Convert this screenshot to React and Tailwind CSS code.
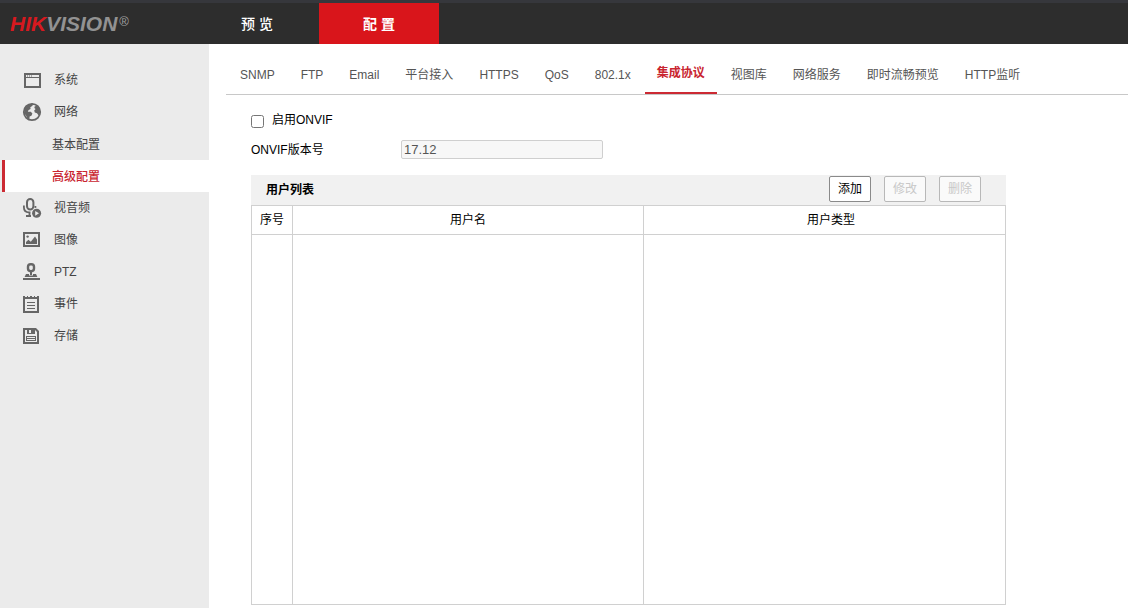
const tabs = [
  "SNMP",
  "FTP",
  "Email",
  "平台接入",
  "HTTPS",
  "QoS",
  "802.1x",
  "集成协议",
  "视图库",
  "网络服务",
  "即时流畅预览",
  "HTTP监听",
];

const activeTab = "集成协议";

const SystemIcon = () => (
  <svg width="20" height="20" viewBox="0 0 20 20" fill="#666" aria-hidden="true">
    <path fillRule="evenodd" d="M2 3h17v15H2zM4 8v8h13V8zM4 5v2h13V5z" />
    <path d="M5 5.5h1v1H5zM7 5.5h1v1H7zM9 5.5h1v1H9z" />
  </svg>
);

const NetworkIcon = () => (
  <svg width="20" height="20" viewBox="0 0 20 20" aria-hidden="true">
    <circle cx="10" cy="10" r="8.2" fill="#ebebeb" stroke="#666" strokeWidth="1.8" />
    <path
      fill="#666"
      d="M3 5.5 6.5 2.5 11 1.5l-.5 2.3-2.2 1.4.3 1.8-2 1-.8 1.8h3l1.6 1.7-1 2.3-1.8.8-.2 2.4-1.6.4-1.4-3.2L2 11zM12.6 4.4 15 3.6l2.6 3.6.6 3.6-1.4 3-1.8-2.6-2.2-.8-.6-1.8 1.4-1.6-1.2-1z"
    />
  </svg>
);

const MediaIcon = () => (
  <svg width="20" height="20" viewBox="0 0 20 20" aria-hidden="true">
    <rect x="5" y="1" width="6.4" height="10.5" rx="3.2" fill="none" stroke="#666" strokeWidth="2" />
    <path d="M1.9 7.5v1.7c0 3 2 5 5 5.2h1.6M7.5 14.5v3M4 18h5" fill="none" stroke="#666" strokeWidth="1.8" />
    <path d="M12.5 8h1.8v1.9h-1.8z" fill="#666" />
    <circle cx="14.6" cy="15.3" r="4.5" fill="#666" />
    <path d="M13.2 12.9v4.8l3.8-2.4z" fill="#ebebeb" />
  </svg>
);

const ImageIcon = () => (
  <svg width="20" height="20" viewBox="0 0 20 20" fill="#666" aria-hidden="true">
    <path fillRule="evenodd" d="M1 2h17v15H1zM3 4v11h13V4z" />
    <circle cx="5.6" cy="6.6" r="1.2" />
    <path d="M4 14v-2l2.4-2.2 2.4 2L13 6.5l2 3V14z" />
  </svg>
);

const PtzIcon = () => (
  <svg width="20" height="20" viewBox="0 0 20 20" fill="#666" aria-hidden="true">
    <rect x="6" y="2.2" width="6" height="7" rx="2.6" fill="none" stroke="#666" strokeWidth="2.4" />
    <path d="M8 9h2v4H8z" />
    <path d="M4 12h3v1.6h4V12h3l1.4 3H2.6zM1 16h17v2H1z" />
  </svg>
);

const EventIcon = () => (
  <svg width="20" height="20" viewBox="0 0 20 20" fill="#666" aria-hidden="true">
    <path fillRule="evenodd" d="M1 3h16v16H1zM3 5v12h12V5z" />
    <path d="M1 2h2v2H1zM5 2h1v2H5zM8 2h2v2H8zM12 2h1v2h-1zM15 2h2v2h-2z" />
    <path d="M5 8h8v1H5zM5 11h8v1H5zM5 14h8v1H5z" />
  </svg>
);

const StorageIcon = () => (
  <svg width="20" height="20" viewBox="0 0 20 20" fill="#666" aria-hidden="true">
    <path fillRule="evenodd" d="M1 2h13l3 3v13H1zM3 4v12h12V6l-2-2z" />
    <path d="M5 3h2v4h2V3h4v5H5z" />
    <path fillRule="evenodd" d="M4 10h10v5H4zM5 11v1h8v-1zM5 13v1h8v-1z" />
  </svg>
);

const menu = [
  { label: "系统", Icon: SystemIcon },
  { label: "网络", Icon: NetworkIcon },
  { label: "基本配置", sub: true },
  { label: "高级配置", sub: true, active: true },
  { label: "视音频", Icon: MediaIcon },
  { label: "图像", Icon: ImageIcon },
  { label: "PTZ", Icon: PtzIcon },
  { label: "事件", Icon: EventIcon },
  { label: "存储", Icon: StorageIcon },
];

const Header = () => (
  <header className="flex h-11 border-t-3 border-[#36373c] bg-[#2d2d2d] text-white">
    <div className="flex w-[199px] items-center gap-[2px] pl-[10px]">
      <span className="text-[21px] leading-5 font-bold italic text-[#929292]">
        <span className="text-[#d7191f]">HIK</span>VISION
      </span>
      <span className="pb-1 text-[13px] leading-4 text-[#a0a0a0]">®</span>
    </div>
    <nav className="flex text-sm">
      <a href="#preview" className="flex w-[120px] items-center justify-center pr-1 font-medium">
        预 览
      </a>
      <a href="#config" className="flex w-[120px] items-center justify-center bg-[#d9151b] font-bold">
        配 置
      </a>
    </nav>
  </header>
);

const Sidebar = () => (
  <aside className="w-[209px] shrink-0 bg-[#ebebeb] pt-5">
    <ul>
      {menu.map(({ label, Icon, sub, active }) => (
        <li key={label} className={active ? "pl-[2px]" : ""}>
          {sub ? (
            <a
              href="#menu"
              className={
                active
                  ? "flex h-8 items-center border-l-3 border-[#cc2a33] bg-white pt-[2px] pl-[47px] font-medium text-[#c9252f]"
                  : "flex h-8 items-center pt-[2px] pl-[52px] text-[#444]"
              }
            >
              {label}
            </a>
          ) : (
            <a href="#menu" className="flex h-8 items-center gap-3 pl-[22px] text-[#444]">
              <Icon />
              {label}
            </a>
          )}
        </li>
      ))}
    </ul>
  </aside>
);

const TabBar = () => (
  <nav className="flex gap-[2px] border-b border-[#c8c8c8] pl-[2px] whitespace-nowrap">
    {tabs.map((tab) => (
      <a
        key={tab}
        href="#tab"
        className={
          tab === activeTab
            ? "flex h-[50px] items-center border-b-2 border-[#cc2a33] px-3 pt-[10px] font-bold text-[#c9252f]"
            : "flex h-[50px] items-center px-3 pt-3 text-[#555]"
        }
      >
        {tab}
      </a>
    ))}
  </nav>
);

const UserList = () => (
  <section className="mt-4 w-full max-w-[755px]">
    <div className="flex h-[30px] items-center justify-between bg-[#f1f1f1] pr-[25px] pl-[15px]">
      <h2 className="font-bold">用户列表</h2>
      <div className="flex gap-[13px] pb-[2px]">
        <button type="button" className="h-[26px] w-[42px] rounded-xs border border-[#8a8a8a] bg-white">
          添加
        </button>
        <button type="button" disabled className="h-[26px] w-[42px] rounded-xs border border-[#b8b8b8] bg-[#fafafa] text-[#c8c8c8]">
          修改
        </button>
        <button type="button" disabled className="h-[26px] w-[42px] rounded-xs border border-[#b8b8b8] bg-[#fafafa] text-[#c8c8c8]">
          删除
        </button>
      </div>
    </div>
    <table className="w-full table-fixed border-collapse">
      <colgroup>
        <col className="w-[41px]" />
        <col className="w-[351px]" />
        <col />
      </colgroup>
      <thead>
        <tr className="h-[29px]">
          <th className="border border-[#d0d0d0] p-0 font-normal">序号</th>
          <th className="border border-[#d0d0d0] p-0 font-normal">用户名</th>
          <th className="border border-[#d0d0d0] p-0 pl-[13px] font-normal">用户类型</th>
        </tr>
      </thead>
      <tbody>
        <tr className="h-[370px]">
          <td className="border border-[#d0d0d0]" />
          <td className="border border-[#d0d0d0]" />
          <td className="border border-[#d0d0d0]" />
        </tr>
      </tbody>
    </table>
  </section>
);

const App = () => {
  return (
    <div className="flex min-h-screen flex-col bg-white font-['Liberation_Sans','Noto_Sans_CJK_SC',sans-serif] text-xs text-black" lang="zh-CN">
      <Header />
      <div className="flex flex-1">
        <Sidebar />
        <main className="min-w-0 flex-1 pl-[17px]">
          <TabBar />
          <div className="pt-4 pl-[25px]">
            <div className="flex h-5 items-center gap-2">
              <input id="onvif" type="checkbox" className="size-[13px]" />
              <label htmlFor="onvif" className="pb-[2px]">
                启用ONVIF
              </label>
            </div>
            <div className="mt-2 flex h-5 items-center">
              <label htmlFor="version" className="w-[150px] pt-[2px]">
                ONVIF版本号
              </label>
              <input
                id="version"
                type="text"
                readOnly
                defaultValue="17.12"
                className="h-[19px] w-[202px] rounded-xs border border-[#cfcfcf] bg-[#f7f7f7] px-[2px] text-[13px] text-[#555]"
              />
            </div>
            <UserList />
          </div>
        </main>
      </div>
    </div>
  );
};

export default App;
